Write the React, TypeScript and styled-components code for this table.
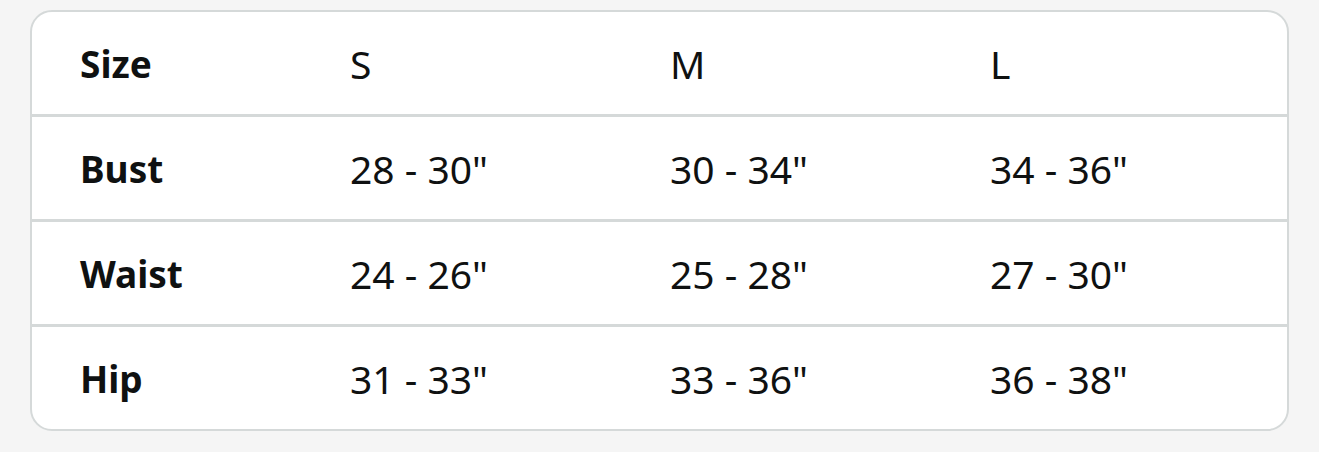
import React from 'react'
import styled, { createGlobalStyle } from 'styled-components'

const GlobalStyle = createGlobalStyle`
  html, body {
    margin: 0;
    padding: 0;
    background: #f5f5f5;
  }
  body {
    font-family: "Noto Sans", "Open Sans", sans-serif;
    color: #0f1111;
  }
`

const Page = styled.div`
  padding: 10px 30px 20px 30px;
  width: 1259px;
`

const Card = styled.div`
  background: #ffffff;
  border: 2px solid #d5d9d9;
  border-radius: 22px;
  overflow: hidden;
`

const Row = styled.div<{ last?: boolean }>`
  display: grid;
  grid-template-columns: 270px 320px 320px 1fr;
  height: 102px;
  align-items: center;
  border-bottom: ${p => (p.last ? 'none' : '3px solid #d5d9d9')};
`

const Cell = styled.div<{ head?: boolean }>`
  padding-left: 48px;
  font-size: ${p => (p.head ? '37px' : '39px')};
  font-weight: ${p => (p.head ? 700 : 400)};
  line-height: 1;
  white-space: nowrap;
`

const rows = [
  ['Size', 'S', 'M', 'L'],
  ['Bust', '28 - 30"', '30 - 34"', '34 - 36"'],
  ['Waist', '24 - 26"', '25 - 28"', '27 - 30"'],
  ['Hip', '31 - 33"', '33 - 36"', '36 - 38"'],
]

export default function App() {
  return (
    <>
      <GlobalStyle />
      <Page>
        <Card>
          {rows.map((r, i) => (
            <Row key={r[0]} last={i === rows.length - 1}>
              {r.map((c, j) => (
                <Cell key={j} head={j === 0}>
                  {c}
                </Cell>
              ))}
            </Row>
          ))}
        </Card>
      </Page>
    </>
  )
}
